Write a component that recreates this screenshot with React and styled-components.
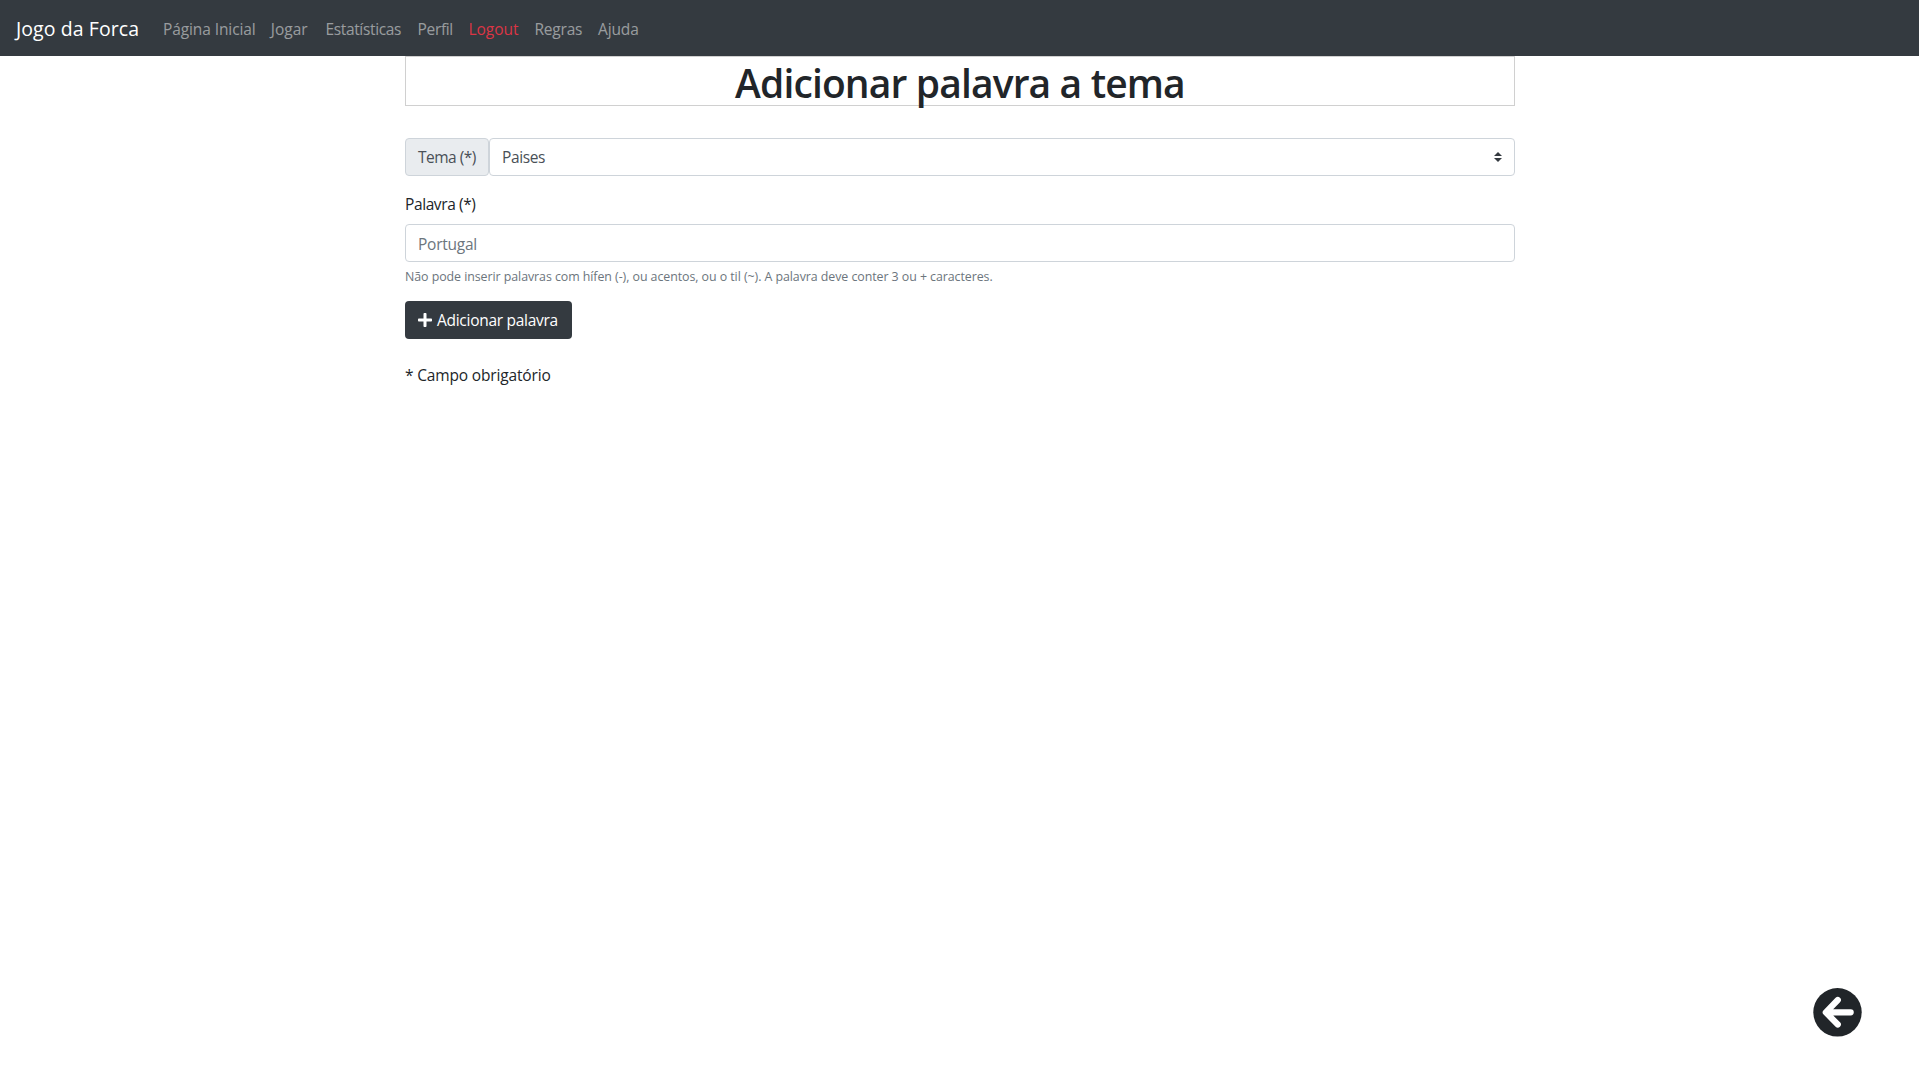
import React from "react";
import styled, { createGlobalStyle } from "styled-components";
import { FaPlus } from "react-icons/fa";

const GlobalStyle = createGlobalStyle`
  *, *::before, *::after { box-sizing: border-box; }
  body {
    margin: 0;
    background: #fff;
    color: #212529;
    font-family: "Open Sans", "Noto Sans", sans-serif;
    font-size: 15.5px;
    line-height: 24px;
    letter-spacing: -0.4px;
  }
`;

const Navbar = styled.nav`
  display: flex;
  align-items: center;
  height: 56px;
  padding: 9px 16px 7px;
  background: #343a40;
`;

const Brand = styled.a`
  width: 123px;
  margin-right: 16px;
  color: #fff;
  font-size: 19.5px;
  line-height: 30px;
  letter-spacing: 0.07px;
  white-space: nowrap;
`;

const NavList = styled.ul`
  display: flex;
  margin: 0;
  padding: 0;
  list-style: none;
`;

const NavLink = styled.li`
  width: ${(p) => p.$width}px;
  padding: 8px;
  color: ${(p) => (p.$danger ? "#dc3545" : "rgba(255, 255, 255, 0.5)")};
  letter-spacing: ${(p) => p.$tracking}px;
  white-space: nowrap;
`;

const Container = styled.main`
  width: 1110px;
  margin: 0 auto 0 405px;
`;

const Title = styled.h1`
  height: 50px;
  margin: 0 0 32px;
  border: 1px solid #d0d0d0;
  font-size: 39px;
  font-weight: 600;
  line-height: 51px;
  letter-spacing: -0.87px;
  text-align: center;
`;

const InputGroup = styled.div`
  display: flex;
  height: 38px;
  margin-bottom: 16px;
`;

const Addon = styled.label`
  width: 84px;
  padding: 6px 12px;
  border: 1px solid #ced4da;
  border-radius: 4px;
  background: #e9ecef;
  color: #495057;
  letter-spacing: -0.52px;
  white-space: nowrap;
`;

const Select = styled.div`
  display: flex;
  flex: 1;
  align-items: center;
  justify-content: space-between;
  padding: 0 12px;
  border: 1px solid #ced4da;
  border-radius: 4px;
  background: #fff;
  color: #495057;
`;

const Label = styled.label`
  display: block;
  margin-bottom: 8px;
`;

const Input = styled.input`
  display: block;
  width: 100%;
  height: 38px;
  padding: 7px 12px 5px;
  border: 1px solid #ced4da;
  border-radius: 4px;
  outline: none;
  font: inherit;
  letter-spacing: -0.25px;
  &::placeholder { color: #6c757d; opacity: 1; }
`;

const Help = styled.small`
  display: block;
  margin: 5px 0 15px;
  color: #6c757d;
  font-size: 12.4px;
  line-height: 19px;
  letter-spacing: -0.06px;
`;

const Button = styled.button`
  display: flex;
  align-items: center;
  gap: 5px;
  width: 167px;
  height: 38px;
  padding: 0 13px;
  border: 0;
  border-radius: 4px;
  background: #343a40;
  color: #fff;
  font: inherit;
  letter-spacing: -0.28px;
  white-space: nowrap;
  svg { flex: none; width: 14px; height: 16px; }
`;

const Required = styled.p`
  margin: 24px 0 0;
  letter-spacing: -0.16px;
`;

const BackButton = styled.a`
  position: fixed;
  top: 988px;
  left: 1813px;
  width: 49px;
  height: 49px;
  svg { display: block; }
`;

const links = [
  { text: "Página Inicial", width: 107.8, tracking: -0.1 },
  { text: "Jogar", width: 54.6, tracking: 0 },
  { text: "Estatísticas", width: 92.2, tracking: -0.34 },
  { text: "Perfil", width: 50.8, tracking: -0.35 },
  { text: "Logout", width: 66.1, tracking: 0, danger: true },
  { text: "Regras", width: 63.6, tracking: -0.2 },
  { text: "Ajuda", width: 57, tracking: -0.15 },
];

export default function App() {
  return (
    <>
      <GlobalStyle />
      <Navbar>
        <Brand>Jogo da Forca</Brand>
        <NavList>
          {links.map((l) => (
            <NavLink key={l.text} $width={l.width} $tracking={l.tracking} $danger={l.danger}>
              {l.text}
            </NavLink>
          ))}
        </NavList>
      </Navbar>
      <Container>
        <Title>Adicionar palavra a tema</Title>
        <InputGroup>
          <Addon>Tema (*)</Addon>
          <Select>
            Paises
            <svg width="8" height="10" viewBox="0 0 4 5">
              <path fill="#343a40" d="M2 0L0 2h4zm0 5L0 3h4z" />
            </svg>
          </Select>
        </InputGroup>
        <Label htmlFor="palavra">Palavra (*)</Label>
        <Input id="palavra" placeholder="Portugal" />
        <Help>
          Não pode inserir palavras com hífen (-), ou acentos, ou o til (~). A palavra deve conter 3 ou + caracteres.
        </Help>
        <Button type="button">
          <FaPlus />
          Adicionar palavra
        </Button>
        <Required>* Campo obrigatório</Required>
      </Container>
      <BackButton aria-label="Voltar">
        <svg width="49" height="49" viewBox="0 0 49 49">
          <circle cx="24.5" cy="24.3" r="24.2" fill="#212529" />
          <path d="M24.8 12L12.8 24.3L24.8 36.5M13.5 24.3H37.7" fill="none" stroke="#fff" strokeWidth="6.2" strokeLinecap="round" strokeLinejoin="round" />
        </svg>
      </BackButton>
    </>
  );
}
